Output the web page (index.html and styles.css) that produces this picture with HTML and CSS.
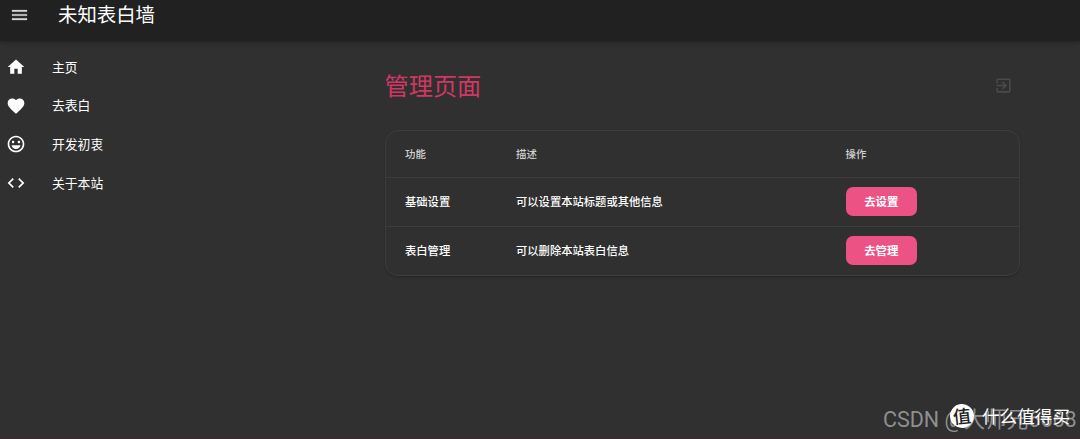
FILE: index.html
```html
<!DOCTYPE html>
<html lang="zh-CN">
<head>
    <meta charset="UTF-8">
    <meta name="viewport" content="width=device-width, initial-scale=1.0">
    <title>未知表白墙</title>
    <link rel="stylesheet" href="styles.css">
</head>
<body>

<header class="appbar">
    <svg class="menu-icon" viewBox="0 0 24 24"><path d="M3 18h18v-2H3v2zm0-5h18v-2H3v2zm0-7v2h18V6H3z"/></svg>
    <div class="site-title">未知表白墙</div>
</header>

<div class="layout">
    <nav class="sidebar">
        <a class="nav-item">
            <svg class="nav-icon" viewBox="0 0 24 24"><path d="M10 20v-6h4v6h5v-8h3L12 3 2 12h3v8z"/></svg>
            <span>主页</span>
        </a>
        <a class="nav-item">
            <svg class="nav-icon" viewBox="0 0 24 24"><path d="M12 21.35l-1.45-1.32C5.4 15.36 2 12.28 2 8.5 2 5.42 4.42 3 7.5 3c1.74 0 3.41.81 4.5 2.09C13.09 3.81 14.76 3 16.5 3 19.58 3 22 5.42 22 8.5c0 3.78-3.4 6.86-8.55 11.54L12 21.35z"/></svg>
            <span>去表白</span>
        </a>
        <a class="nav-item">
            <svg class="nav-icon" viewBox="0 0 24 24"><path d="M11.99 2C6.47 2 2 6.48 2 12s4.47 10 9.99 10C17.52 22 22 17.52 22 12S17.52 2 11.99 2zM12 20c-4.42 0-8-3.58-8-8s3.58-8 8-8 8 3.58 8 8-3.58 8-8 8zm3.5-9c.83 0 1.5-.67 1.5-1.5S16.33 8 15.5 8 14 8.67 14 9.5s.67 1.5 1.5 1.5zm-7 0c.83 0 1.5-.67 1.5-1.5S9.33 8 8.5 8 7 8.67 7 9.5 7.67 11 8.5 11zm3.5 7c2.6 0 4.8-1.7 5.5-4.5h-11C7.2 16.3 9.4 18 12 18z"/></svg>
            <span>开发初衷</span>
        </a>
        <a class="nav-item">
            <svg class="nav-icon" viewBox="0 0 24 24"><path d="M9.4 16.6L4.8 12l4.6-4.6L8 6l-6 6 6 6 1.4-1.4zm5.2 0l4.6-4.6-4.6-4.6L16 6l6 6-6 6-1.4-1.4z"/></svg>
            <span>关于本站</span>
        </a>
    </nav>

    <main class="content">
        <div class="page-head">
            <h1 class="page-title">管理页面</h1>
            <svg class="exit-icon" viewBox="0 0 24 24"><path d="M10.09 15.59L11.5 17l5-5-5-5-1.41 1.41L12.67 11H3v2h9.67l-2.58 2.59zM19 3H5c-1.11 0-2 .9-2 2v4h2V5h14v14H5v-4H3v4c0 1.1.89 2 2 2h14c1.1 0 2-.9 2-2V5c0-1.1-.9-2-2-2z"/></svg>
        </div>

        <div class="table">
            <div class="row head">
                <div>功能</div>
                <div>描述</div>
                <div>操作</div>
            </div>
            <div class="row">
                <div>基础设置</div>
                <div>可以设置本站标题或其他信息</div>
                <div><button class="btn">去设置</button></div>
            </div>
            <div class="row">
                <div>表白管理</div>
                <div>可以删除本站表白信息</div>
                <div><button class="btn">去管理</button></div>
            </div>
        </div>
    </main>
</div>

<div class="csdn-mark">CSDN @大师兄6668</div>
<div class="smzdm-mark">
    <span class="smzdm-logo">值</span>
    <span class="smzdm-name">什么值得买</span>
</div>

</body>
</html>
```

FILE: styles.css
```css
* {
    box-sizing: border-box;
}

body {
    margin: 0;
    height: 439px;
    overflow: hidden;
    position: relative;
    background-color: #303030;
    border-bottom: 2px solid #352d30;
    color: #fff;
    font-family: "Noto Sans CJK SC", sans-serif;
}

svg {
    display: block;
    fill: currentColor;
}

.appbar {
    display: flex;
    align-items: center;
    height: 41px;
    padding: 0 0 11px 9px;
    background-color: #212121;
    box-shadow: 0 1px 5px rgba(0, 0, 0, 0.35);
}

.menu-icon {
    width: 21px;
    height: 20px;
    color: #d8d8d8;
    stroke: currentColor;
    stroke-width: 0.3;
}

.site-title {
    margin-left: 28px;
    padding-bottom: 2px;
    font-size: 19.4px;
    line-height: 28px;
}

.layout {
    display: flex;
}

.sidebar {
    width: 384.5px;
    padding-top: 7px;
}

.nav-item {
    display: flex;
    align-items: center;
    height: 38.6px;
    padding-left: 7px;
    font-size: 12.8px;
}

.nav-item span {
    padding-bottom: 2px;
}

.nav-icon {
    width: 20px;
    height: 20px;
    margin: 0 26px 0 -1px;
}

.content {
    width: 635px;
    padding-top: 24px;
}

.page-head {
    display: flex;
    justify-content: space-between;
    align-items: center;
    height: 40px;
    padding-right: 7px;
}

.page-title {
    margin: 0;
    padding-bottom: 2px;
    font-size: 24.2px;
    font-weight: 400;
    color: #d23764;
}

.exit-icon {
    width: 19px;
    height: 19px;
    color: #4a4a4a;
}

.table {
    margin-top: 25px;
    border: 1px solid #3d3d3d;
    border-radius: 13px;
    box-shadow: 0 1px 2px rgba(0, 0, 0, 0.25);
    font-size: 11.3px;
    font-weight: 500;
}

.row {
    display: grid;
    grid-template-columns: 111px 329.5px 1fr;
    align-items: center;
    height: 49px;
    padding: 0 0 2px 19.5px;
    border-top: 1px solid #3d3d3d;
}

.row.head {
    height: 46px;
    border-top: none;
    font-size: 10.4px;
    color: #d0d0d0;
}

.btn {
    display: block;
    width: 71.5px;
    height: 29px;
    padding: 0 0 1px;
    border: none;
    border-radius: 7px;
    background-color: #ec5283;
    color: #fff;
    font: 700 11.4px "Noto Sans CJK SC", sans-serif;
}

/* watermarks */
.csdn-mark {
    position: absolute;
    left: 883px;
    top: 405px;
    font-family: Roboto, "Noto Sans CJK SC", sans-serif;
    font-size: 21.5px;
    line-height: 30px;
    white-space: nowrap;
    color: #8f8f8f;
}

.smzdm-mark {
    position: absolute;
    left: 950px;
    top: 402px;
    display: flex;
    align-items: center;
    gap: 8px;
    height: 28px;
    font-size: 17.6px;
    white-space: nowrap;
}

.smzdm-name {
    padding-bottom: 2px;
}

.smzdm-logo {
    width: 24px;
    height: 24px;
    border-radius: 50%;
    background-color: #fff;
    color: #222;
    font-size: 18px;
    font-weight: 500;
    line-height: 23px;
    text-align: center;
    transform: rotate(-6deg);
}
```
